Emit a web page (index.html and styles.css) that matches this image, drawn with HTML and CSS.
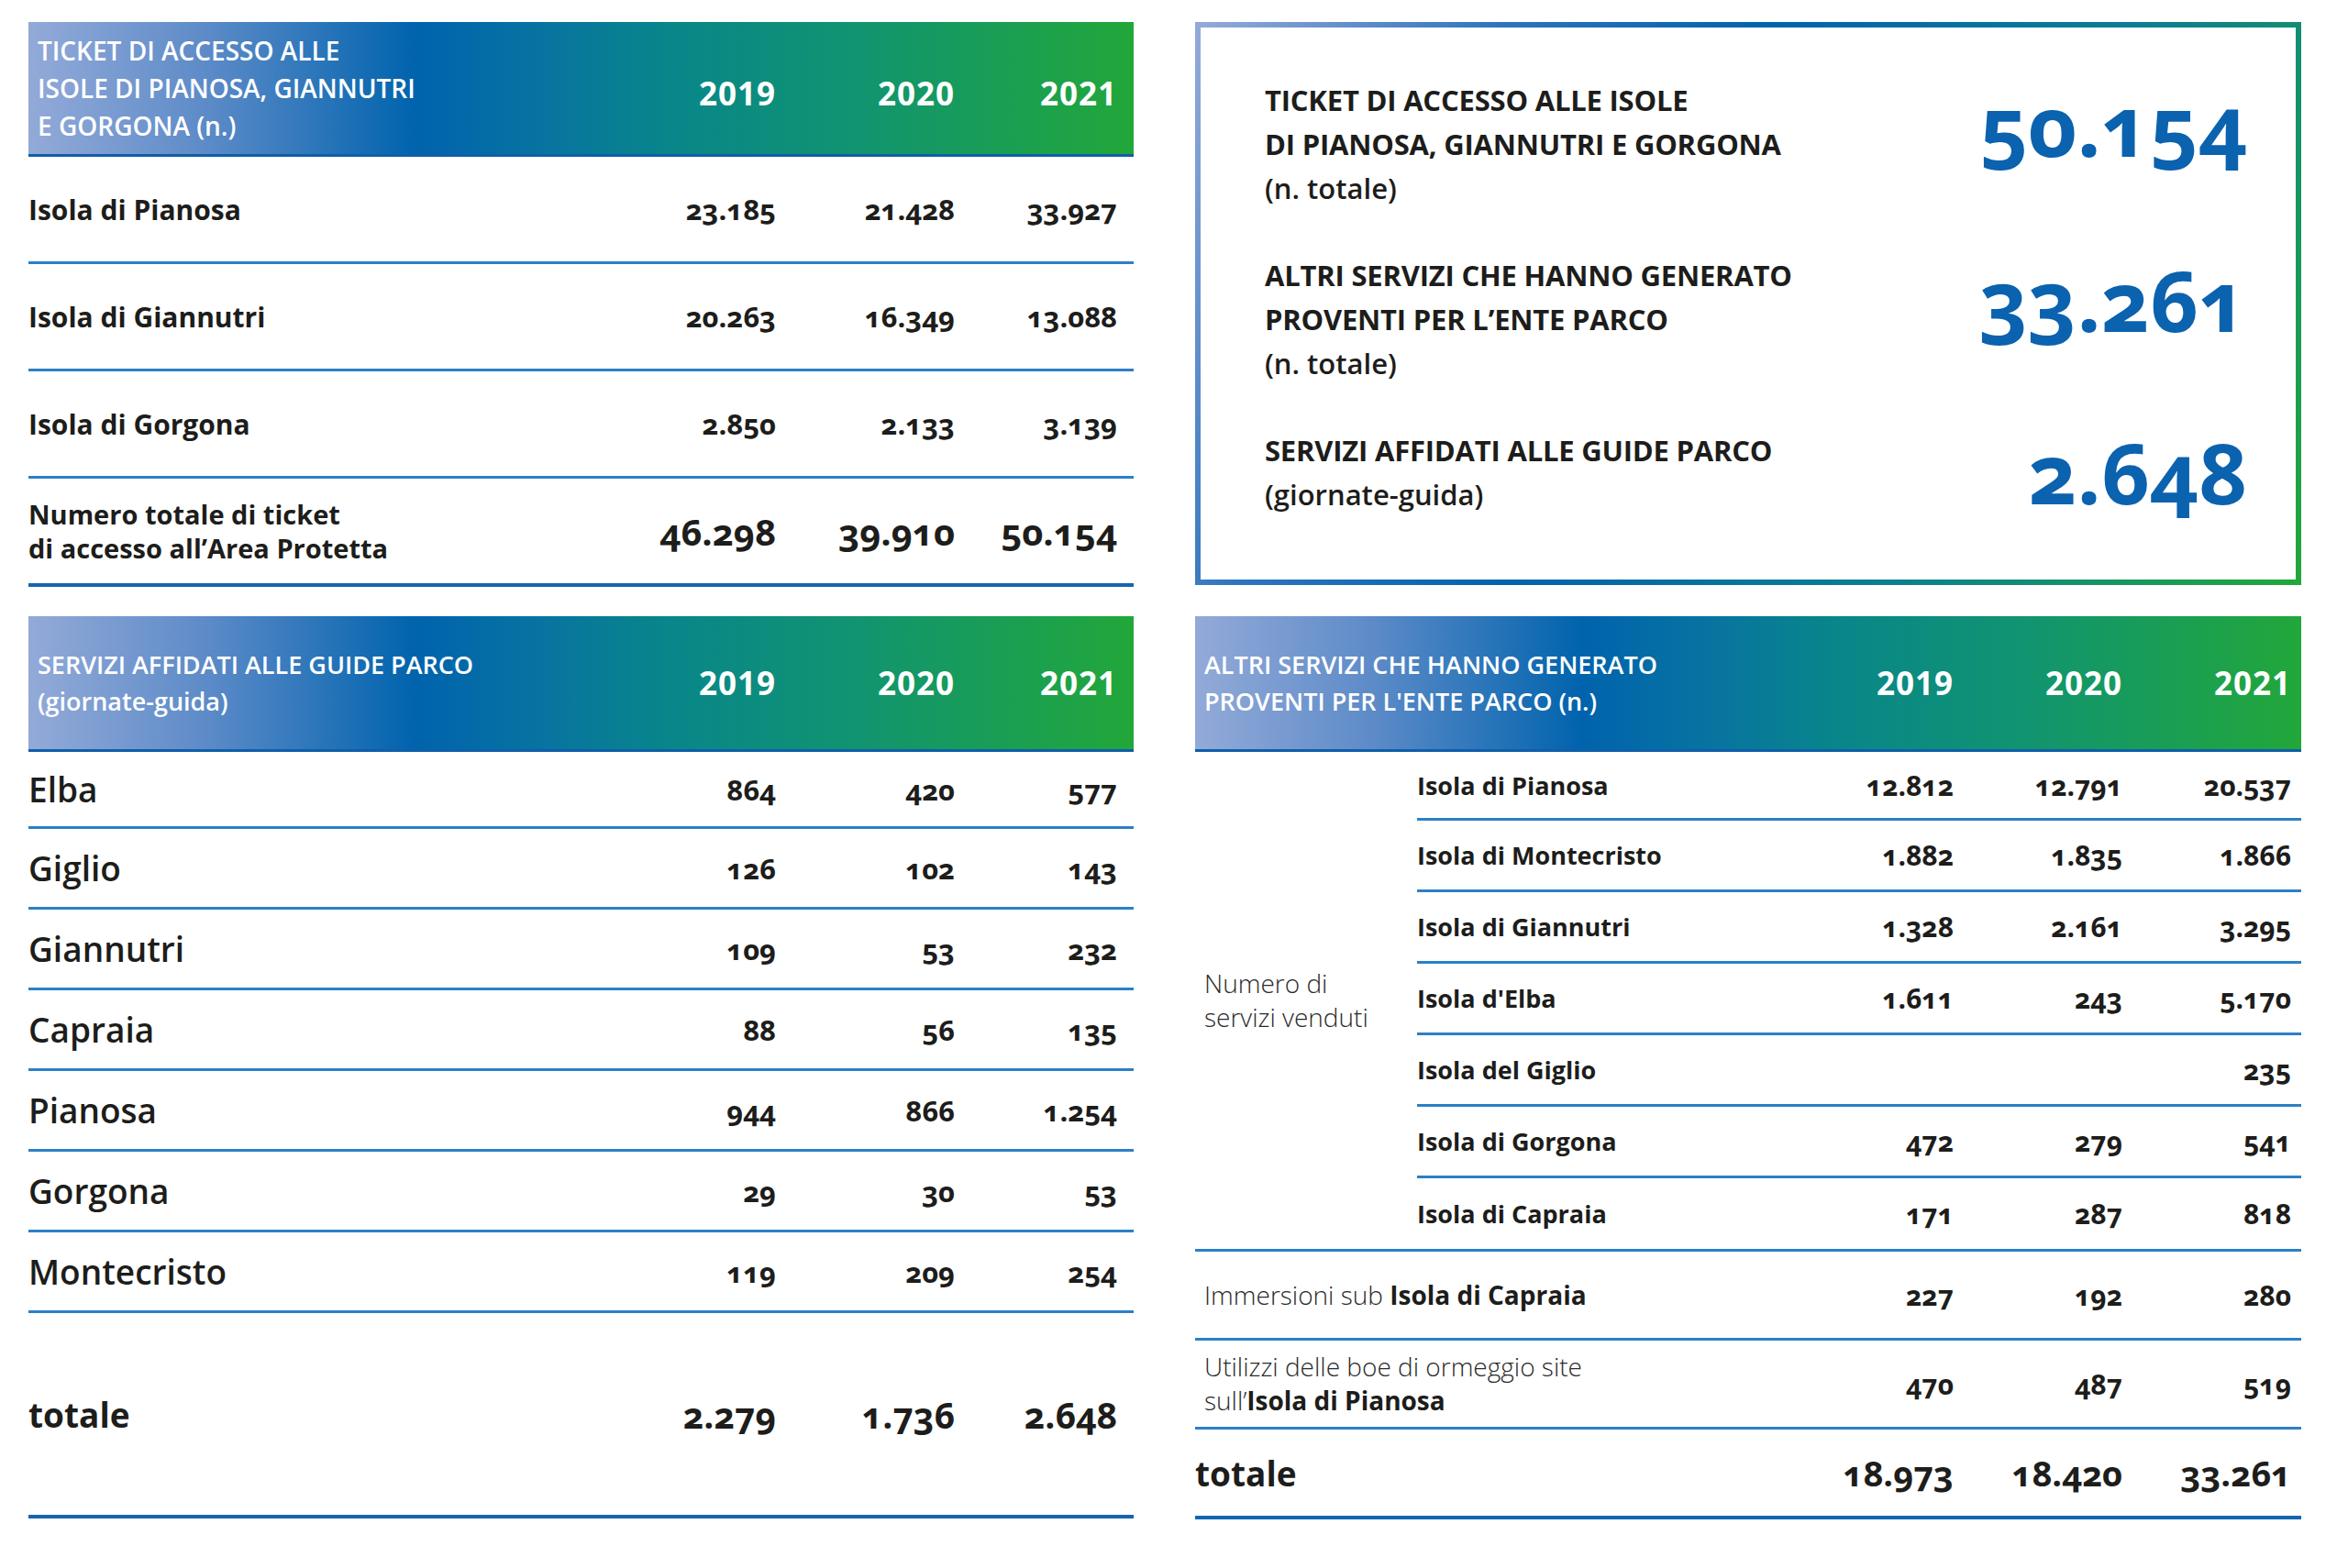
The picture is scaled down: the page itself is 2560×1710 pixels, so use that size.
FILE: index.html
```html
<!DOCTYPE html>
<html lang="it">
<head>
<meta charset="utf-8">
<title>Ticket e servizi</title>
<link rel="stylesheet" href="styles.css">
</head>
<body>
<div class="page">
  <div class="col">
    <section class="tbl t1">
      <div class="hd">
        <div class="ttl">TICKET DI ACCESSO ALLE<br>ISOLE DI PIANOSA, GIANNUTRI<br>E GORGONA (n.)</div>
        <div class="yr">2019</div><div class="yr">2020</div><div class="yr">2021</div>
      </div>
      <div class="row"><div class="lbl">Isola di Pianosa</div><div class="n">23.185</div><div class="n">21.428</div><div class="n">33.927</div></div>
      <div class="row"><div class="lbl">Isola di Giannutri</div><div class="n">20.263</div><div class="n">16.349</div><div class="n">13.088</div></div>
      <div class="row"><div class="lbl">Isola di Gorgona</div><div class="n">2.850</div><div class="n">2.133</div><div class="n">3.139</div></div>
      <div class="row tot"><div class="lbl">Numero totale di ticket<br>di accesso all’Area Protetta</div><div class="n">46.298</div><div class="n">39.910</div><div class="n">50.154</div></div>
    </section>

    <section class="tbl t2">
      <div class="hd">
        <div class="ttl">SERVIZI AFFIDATI ALLE GUIDE PARCO<br>(giornate-guida)</div>
        <div class="yr">2019</div><div class="yr">2020</div><div class="yr">2021</div>
      </div>
      <div class="row first"><div class="lbl">Elba</div><div class="n">864</div><div class="n">420</div><div class="n">577</div></div>
      <div class="row"><div class="lbl">Giglio</div><div class="n">126</div><div class="n">102</div><div class="n">143</div></div>
      <div class="row"><div class="lbl">Giannutri</div><div class="n">109</div><div class="n">53</div><div class="n">232</div></div>
      <div class="row"><div class="lbl">Capraia</div><div class="n">88</div><div class="n">56</div><div class="n">135</div></div>
      <div class="row"><div class="lbl">Pianosa</div><div class="n">944</div><div class="n">866</div><div class="n">1.254</div></div>
      <div class="row"><div class="lbl">Gorgona</div><div class="n">29</div><div class="n">30</div><div class="n">53</div></div>
      <div class="row"><div class="lbl">Montecristo</div><div class="n">119</div><div class="n">209</div><div class="n">254</div></div>
      <div class="row tot"><div class="lbl">totale</div><div class="n">2.279</div><div class="n">1.736</div><div class="n">2.648</div></div>
    </section>
  </div>

  <div class="col right">
    <section class="box">
      <div class="blk b1">
        <div class="blab">TICKET DI ACCESSO ALLE ISOLE<br>DI PIANOSA, GIANNUTRI E GORGONA<br><span class="sm">(n. totale)</span></div>
        <div class="big">50.154</div>
      </div>
      <div class="blk b2">
        <div class="blab">ALTRI SERVIZI CHE HANNO GENERATO<br>PROVENTI PER L’ENTE PARCO<br><span class="sm">(n. totale)</span></div>
        <div class="big">33.261</div>
      </div>
      <div class="blk b3">
        <div class="blab">SERVIZI AFFIDATI ALLE GUIDE PARCO<br><span class="sm">(giornate-guida)</span></div>
        <div class="big">2.648</div>
      </div>
    </section>

    <section class="tbl t3">
      <div class="hd">
        <div class="ttl">ALTRI SERVIZI CHE HANNO GENERATO<br>PROVENTI PER L'ENTE PARCO (n.)</div>
        <div class="yr">2019</div><div class="yr">2020</div><div class="yr">2021</div>
      </div>
      <div class="grp">
        <div class="glab">Numero di<br>servizi venduti</div>
        <div class="subs">
          <div class="sub first"><div class="slbl">Isola di Pianosa</div><div class="n">12.812</div><div class="n">12.791</div><div class="n">20.537</div></div>
          <div class="sub"><div class="slbl">Isola di Montecristo</div><div class="n">1.882</div><div class="n">1.835</div><div class="n">1.866</div></div>
          <div class="sub"><div class="slbl">Isola di Giannutri</div><div class="n">1.328</div><div class="n">2.161</div><div class="n">3.295</div></div>
          <div class="sub"><div class="slbl">Isola d'Elba</div><div class="n">1.611</div><div class="n">243</div><div class="n">5.170</div></div>
          <div class="sub"><div class="slbl">Isola del Giglio</div><div class="n"></div><div class="n"></div><div class="n">235</div></div>
          <div class="sub"><div class="slbl">Isola di Gorgona</div><div class="n">472</div><div class="n">279</div><div class="n">541</div></div>
          <div class="sub last"><div class="slbl">Isola di Capraia</div><div class="n">171</div><div class="n">287</div><div class="n">818</div></div>
        </div>
      </div>
      <div class="row"><div class="lbl lt">Immersioni sub <b>Isola di Capraia</b></div><div class="n">227</div><div class="n">192</div><div class="n">280</div></div>
      <div class="row"><div class="lbl lt">Utilizzi delle boe di ormeggio site<br>sull’<b>Isola di Pianosa</b></div><div class="n">470</div><div class="n">487</div><div class="n">519</div></div>
      <div class="row tot"><div class="lbl">totale</div><div class="n">18.973</div><div class="n">18.420</div><div class="n">33.261</div></div>
    </section>
  </div>
</div>
</body>
</html>
```

FILE: styles.css
```css
* { box-sizing: border-box; }

body {
  margin: 0;
  background: #ffffff;
  font-family: "Open Sans", "Noto Sans", sans-serif;
  color: #1d1d1b;
}

.page {
  display: flex;
  gap: 67px;
  padding: 24px 0 0 31px;
  width: 2560px;
  height: 1710px;
}

.col {
  width: 1205px;
  display: flex;
  flex-direction: column;
}

.col.right { width: 1206px; }

/* ---------- table headers ---------- */
.hd {
  display: grid;
  grid-template-columns: 1fr 195px 195px 195px;
  align-items: center;
  color: #ffffff;
  background: linear-gradient(to right, #93aad8 0%, #5d8bc8 16%, #0063ad 35%, #0874a0 47%, #08868a 58%, #119470 75%, #22a73a 100%);
  border-bottom: 3px solid #0f5ea9;
}

.t1 .hd { height: 147px; }
.t2 .hd, .t3 .hd { height: 148px; }

.t2 { margin-top: 32px; }

.ttl {
  padding-left: 10px;
  font-size: 28px;
  font-weight: 600;
  line-height: 41px;
}

.t2 .ttl, .t3 .ttl { font-size: 27px; line-height: 40px; }

.yr {
  text-align: right;
  font-size: 35px;
  font-weight: 700;
  letter-spacing: 1px;
}

.t1 .yr { padding-top: 10px; }

.hd > :last-child,
.row > :last-child { padding-right: 18px; }

/* ---------- rows ---------- */
.row {
  display: grid;
  grid-template-columns: 1fr 195px 195px 195px;
  align-items: center;
  border-bottom: 3px solid #2b80c7;
}

.n {
  text-align: right;
  font-size: 31px;
  font-weight: 700;
  font-variant-numeric: oldstyle-nums;
}

.lbl {
  font-size: 30px;
  font-weight: 700;
}

.t1 .row { height: 117px; }
.t1 .row.tot { height: 118px; border-bottom: 4px solid #1565b0; }
.t1 .tot .lbl { font-size: 29px; line-height: 37px; }
.t1 .tot .n { font-size: 40px; font-weight: 700; }

.t2 .row { height: 88px; }
.t2 .row.first { height: 84px; }
.t2 .lbl { font-size: 37px; font-weight: 600; }
.t2 .n { font-size: 31px; }
.t2 .row.tot { height: 224px; border-bottom: 4px solid #1565b0; }
.t2 .tot .lbl { font-size: 37px; font-weight: 700; }
.t2 .tot .n { font-size: 39px; font-weight: 700; }

/* ---------- box ---------- */
.box {
  height: 614px;
  border: 6px solid transparent;
  border-image: linear-gradient(115deg, #93aad8 0%, #2f74bd 22%, #0063ad 42%, #0a7f92 70%, #22a73a 100%) 1;
  padding: 55px 53px 0 70px;
  display: flex;
  flex-direction: column;
  gap: 47px;
  margin-bottom: 34px;
}

.blk {
  display: flex;
  justify-content: space-between;
  align-items: center;
}

.blab {
  font-size: 31px;
  font-weight: 700;
  line-height: 48px;
  letter-spacing: -0.2px;
  color: #1d1d1b;
}

.blab .sm { font-weight: 600; letter-spacing: 0; }

.big {
  font-size: 92px;
  font-weight: 700;
  color: #0b62ae;
  line-height: 1;
  font-variant-numeric: oldstyle-nums;
}

.b1 .big, .b2 .big { margin-bottom: 42px; }

/* ---------- right table ---------- */
.t3 .hd { grid-template-columns: 1fr 184px 184px 195px; }
.t3 .hd > :last-child { padding-right: 11px; }

.grp {
  display: grid;
  grid-template-columns: 242px 1fr;
  border-bottom: 3px solid #2b80c7;
}

.glab {
  align-self: center;
  padding-left: 10px;
  font-size: 28px;
  font-weight: 300;
  line-height: 37px;
  color: #2a2a2a;
}

.sub {
  display: grid;
  grid-template-columns: 1fr 184px 184px 195px;
  align-items: center;
  height: 78px;
  border-bottom: 3px solid #2b80c7;
}

.sub.first { height: 75px; }
.sub.last { border-bottom: none; height: 77px; }
.sub > :last-child { padding-right: 11px; }

.slbl {
  font-size: 27px;
  font-weight: 700;
}

.t3 .n { font-size: 30px; }

.t3 .row { grid-template-columns: 1fr 184px 184px 195px; height: 97px; }
.t3 .row > :last-child { padding-right: 11px; }

.lbl.lt {
  padding-left: 10px;
  font-size: 28px;
  font-weight: 300;
  line-height: 37px;
  color: #2a2a2a;
}

.lbl.lt b { font-weight: 700; color: #1d1d1b; }

.t3 .row.tot { height: 98px; border-bottom: 4px solid #1565b0; }
.t3 .tot .lbl { font-size: 37px; font-weight: 700; }
.t3 .tot .n { font-size: 38px; font-weight: 700; }
```
